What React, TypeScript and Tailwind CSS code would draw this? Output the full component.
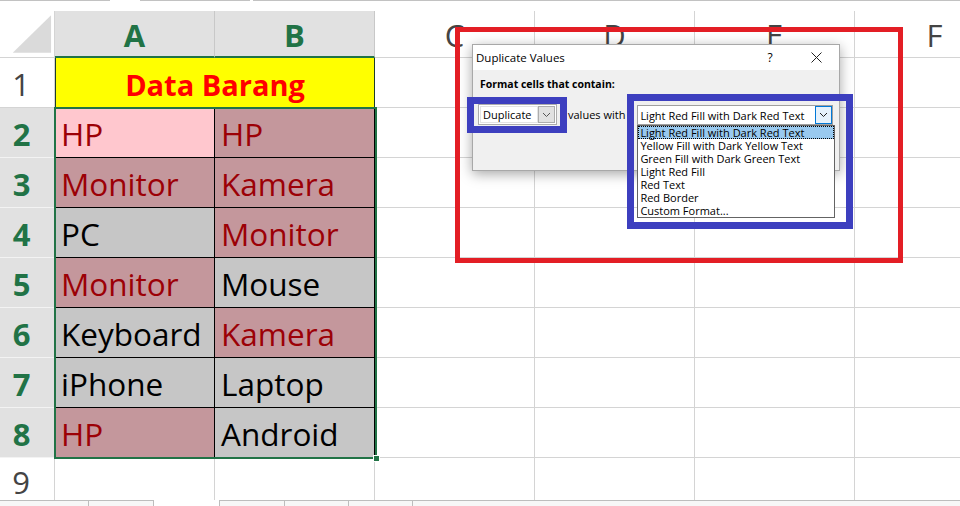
import React from 'react';

type Cell = { t: string; c: string };

const DUP = 'bg-[#c4979c] text-[#9c0006]';
const NORM = 'bg-[#c6c6c6] text-black';

const rows: Cell[][] = [
  [{ t: 'HP', c: 'bg-[#ffc7ce] text-[#9c0006]' }, { t: 'HP', c: DUP }],
  [{ t: 'Monitor', c: DUP }, { t: 'Kamera', c: DUP }],
  [{ t: 'PC', c: NORM }, { t: 'Monitor', c: DUP }],
  [{ t: 'Monitor', c: DUP }, { t: 'Mouse', c: NORM }],
  [{ t: 'Keyboard', c: NORM }, { t: 'Kamera', c: DUP }],
  [{ t: 'iPhone', c: NORM }, { t: 'Laptop', c: NORM }],
  [{ t: 'HP', c: DUP }, { t: 'Android', c: NORM }],
];

const cellFont = { fontFamily: '"Open Sans", "Noto Sans", sans-serif' };

function Empty() {
  return <div className="border-r border-b border-[#d4d4d4] bg-white" />;
}

function Chevron({ color = '#333' }: { color?: string }) {
  return (
    <svg width="9" height="6" viewBox="0 0 9 6" fill="none">
      <path d="M1 1 L4.5 4.5 L8 1" stroke={color} strokeWidth="1" />
    </svg>
  );
}

const items = [
  'Light Red Fill with Dark Red Text',
  'Yellow Fill with Dark Yellow Text',
  'Green Fill with Dark Green Text',
  'Light Red Fill',
  'Red Text',
  'Red Border',
  'Custom Format...',
];

export default function App() {
  return (
    <div className="relative w-[960px] h-[506px] overflow-hidden bg-white flex flex-col" style={cellFont}>
      {/* top strip */}
      <div className="h-[11px] flex items-start shrink-0">
        <div className="w-[110px] h-px bg-[#c2c2c2]" />
        <div className="w-[30px]" />
        <div className="w-[110px] h-px bg-[#c2c2c2]" />
        <div className="w-[3px]" />
        <div className="flex-1 h-px bg-[#c2c2c2]" />
      </div>

      {/* sheet grid */}
      <div className="flex-1 min-h-0 overflow-hidden">
        <div className="relative grid grid-cols-[55px_repeat(6,160px)] grid-rows-[47px_repeat(9,50px)] w-[1015px]">
          {/* corner */}
          <div className="border-r border-b border-[#d4d4d4] bg-white flex items-start">
            <svg width="55" height="46" viewBox="0 0 55 46">
              <polygon points="13,42 52,42 52,4" fill="#dadada" />
            </svg>
          </div>
          {/* headers */}
          {['A', 'B'].map((h) => (
            <div
              key={h}
              className="bg-[#e1e1e1] border-r border-[#c8c8c8] border-b-2 border-b-[#217346] flex items-center justify-center pt-[3px] text-[31px] leading-none font-bold text-[#217346]"
            >
              {h}
            </div>
          ))}
          {['C', 'D', 'E', 'F'].map((h) => (
            <div
              key={h}
              className="bg-white border-r border-b border-[#d4d4d4] flex items-center justify-center pt-[3px] text-[31px] leading-none text-[#444444]"
            >
              {h}
            </div>
          ))}

          {/* row 1 */}
          <div className="bg-white border-r border-b border-[#d4d4d4] flex items-center justify-center pr-[12px] pt-[3px] text-[31px] leading-none text-[#444444]">
            1
          </div>
          <div className="col-span-2 bg-[#ffff00] border-l border-r border-[#1e3d2a] flex items-center justify-center pt-[3px] text-[29px] leading-none font-bold text-[#ff0000]">
            Data Barang
          </div>
          <Empty />
          <Empty />
          <Empty />
          <Empty />

          {/* rows 2-8 */}
          {rows.map((r, i) => (
            <React.Fragment key={i}>
              <div className="bg-[#e1e1e1] border-b border-[#f3f3f3] flex items-center justify-center pr-[12px] pt-[3px] text-[31px] leading-none font-bold text-[#217346]">
                {i + 2}
              </div>
              {r.map((c, j) => (
                <div
                  key={j}
                  className={`${c.c} border-r border-b border-black flex items-center pl-[6px] pt-[2px] text-[31.5px] leading-none`}
                >
                  {c.t}
                </div>
              ))}
              <Empty />
              <Empty />
              <Empty />
              <Empty />
            </React.Fragment>
          ))}

          {/* row 9 */}
          <div className="bg-white border-r border-b border-[#d4d4d4] flex items-start justify-center pr-[12px] pt-[9px] text-[31px] leading-none text-[#444444]">
            9
          </div>
          <Empty />
          <Empty />
          <Empty />
          <Empty />
          <Empty />
          <Empty />

          {/* selection outline */}
          <div className="absolute left-[54px] top-[96px] w-[323px] h-[352px] border-2 border-[#217346] pointer-events-none" />
          <div className="absolute left-[373px] top-[444px] w-[7px] h-[7px] bg-[#217346] border border-white pointer-events-none" />
        </div>
      </div>

      {/* bottom strip */}
      <div className="h-[6px] shrink-0 flex items-stretch bg-[#f7f7f7]">
        <div className="w-[154px] border-t border-r border-[#bdbdbd] flex">
          <div className="w-[89px] border-r border-[#bdbdbd]" />
        </div>
        <div className="w-[65px] bg-white" />
        <div className="flex-1 border-t border-l border-[#bdbdbd] flex">
          <div className="w-[65px] border-r border-[#bdbdbd]" />
          <div className="w-[64px] border-r border-[#bdbdbd]" />
          <div className="w-[64px] border-r border-[#bdbdbd]" />
        </div>
      </div>

      {/* dialog */}
      <div
        className="absolute left-[472px] top-[44px] w-[368px] h-[127px] border border-[#a8a8a8] bg-[#f0f0f0] shadow-[0_3px_12px_rgba(0,0,0,0.35)] flex flex-col text-black"
        style={{ fontFamily: '"Open Sans", "Noto Sans", sans-serif' }}
      >
        <div className="h-[25px] bg-white flex items-center shrink-0">
          <div className="flex-1 pl-[3px] text-[11.5px] leading-[14px]">Duplicate Values</div>
          <div className="w-[24px] text-center text-[12px] leading-[14px]">?</div>
          <div className="w-[11px]" />
          <div className="w-[46px] h-full flex items-center justify-center">
            <svg width="11" height="11" viewBox="0 0 11 11">
              <path d="M0.5 0.5 L10.5 10.5 M10.5 0.5 L0.5 10.5" stroke="#222" strokeWidth="1" />
            </svg>
          </div>
        </div>
        <div className="flex-1 flex flex-col px-[5px]">
          <div className="pl-[2px] pt-[7px] text-[10.5px] leading-[14px] font-bold">Format cells that contain:</div>
          <div className="mt-[13px] flex items-start">
            <div className="w-[79px] h-[21px] border border-[#adadad] bg-white flex items-center p-[1px]">
              <div className="flex-1 h-full border border-[#e3e3e3] flex items-center pl-[2px] text-[11px] leading-none">Duplicate</div>
              <div className="w-[17px] h-full bg-[#e1e1e1] border border-[#adadad] flex items-center justify-center">
                <Chevron color="#555" />
              </div>
            </div>
            <div className="ml-[11px] h-[21px] flex items-center text-[11px] leading-none">values with</div>
            <div className="ml-[12px] mt-[1px] relative w-[196px] h-[20px] border border-[#a0a0a0] bg-white flex items-center">
              <div className="flex-1 pl-[2px] text-[11px] leading-none whitespace-nowrap">Light Red Fill with Dark Red Text</div>
              <div className="w-[17px] h-[18px] bg-[#e5f1fb] border border-[#0078d7] flex items-center justify-center">
                <Chevron color="#222" />
              </div>
              <div className="absolute left-[-1px] top-[19px] w-[198px] border border-[#646464] bg-white flex flex-col z-10">
                {items.map((it, k) => (
                  <div
                    key={it}
                    className={`h-[13px] flex items-center pl-[2px] text-[11px] leading-none whitespace-nowrap ${
                      k === 0 ? 'bg-[#99c9ef] outline outline-1 outline-dotted outline-black -outline-offset-1' : ''
                    }`}
                  >
                    {it}
                  </div>
                ))}
              </div>
            </div>
          </div>
        </div>
      </div>

      {/* annotations */}
      <div className="absolute left-[455px] top-[27px] w-[448px] h-[236px] border-[5px] border-[#e31e25] pointer-events-none" />
      <div className="absolute left-[467px] top-[97px] w-[100px] h-[36px] border-[7px] border-[#3d3fbf] pointer-events-none" />
      <div className="absolute left-[627px] top-[94px] w-[226px] h-[135px] border-[7px] border-[#3d3fbf] pointer-events-none" />
    </div>
  );
}
